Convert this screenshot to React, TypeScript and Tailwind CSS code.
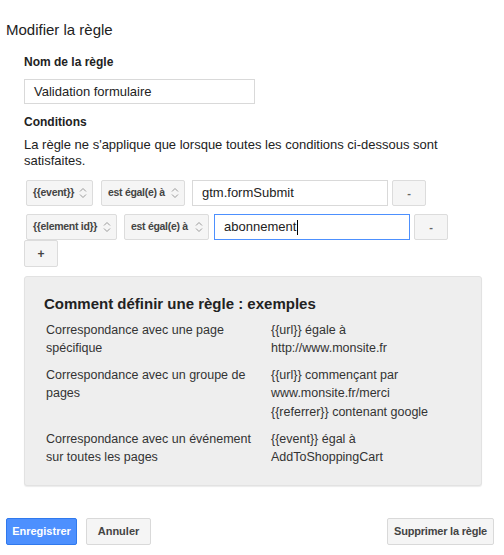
const font = { fontFamily: '"Liberation Sans", Arial, sans-serif' };

function Chevrons() {
  return (
    <svg width="8" height="12" viewBox="0 0 8 12" className="shrink-0">
      <path d="M1 4.5 L4 1.5 L7 4.5" fill="none" stroke="#9a9a9a" strokeWidth="1" />
      <path d="M1 7.5 L4 10.5 L7 7.5" fill="none" stroke="#9a9a9a" strokeWidth="1" />
    </svg>
  );
}

function Select({ label, width }: { label: string; width: string }) {
  return (
    <div
      className={`flex h-[26px] ${width} items-center justify-between gap-[3px] whitespace-nowrap rounded-[2px] border border-[#dcdcdc] bg-[#f5f5f5] pl-[6px] pr-[5px] text-[10.5px] font-bold tracking-[-0.3px] text-[#444]`}
    >
      <span>{label}</span>
      <Chevrons />
    </div>
  );
}

function MinusButton() {
  return (
    <div className="flex h-[26px] w-[34px] items-center justify-center rounded-[2px] border border-[#dcdcdc] bg-[#f5f5f5] text-[11px] font-bold text-[#666]">
      -
    </div>
  );
}

const examples = [
  {
    label: ["Correspondance avec une page", "spécifique"],
    rule: [["{{url}} égale à", "http://www.monsite.fr"]],
  },
  {
    label: ["Correspondance avec un groupe de", "pages"],
    rule: [["{{url}} commençant par", "www.monsite.fr/merci"], ["{{referrer}} contenant google"]],
  },
  {
    label: ["Correspondance avec un événement", "sur toutes les pages"],
    rule: [["{{event}} égal à", "AddToShoppingCart"]],
  },
];

export default function App() {
  return (
    <div className="h-[555px] w-[504px] bg-white text-[#222]" style={font}>
      <h1 className="pl-[6px] pt-[21px] text-[15px] leading-[18px]">Modifier la règle</h1>

      <div className="pl-[24px]">
        <div className="mt-[16px] text-[12px] font-bold leading-[15px]">Nom de la règle</div>
        <div className="mt-[9px] flex h-[25px] w-[231px] items-center border border-[#d9d9d9] pl-[9px] text-[13px]">
          Validation formulaire
        </div>

        <div className="mt-[11px] text-[12px] font-bold leading-[15px]">Conditions</div>
        <p className="mt-[7px] w-[440px] text-[13px] leading-[16px]">
          La règle ne s'applique que lorsque toutes les conditions ci-dessous sont satisfaites.
        </p>

        <div className="mt-[11px] flex flex-col pl-[2px]">
          <div className="flex items-center">
            <Select label="{{event}}" width="w-[67px]" />
            <div className="ml-[8px]">
              <Select label="est égal(e) à" width="w-[84px]" />
            </div>
            <div className="ml-[7px] flex h-[26px] w-[196px] items-center border border-[#d9d9d9] pl-[9px] text-[13px]">
              gtm.formSubmit
            </div>
            <div className="ml-[4px]">
              <MinusButton />
            </div>
          </div>
          <div className="mt-[8px] flex items-center">
            <Select label="{{element id}}" width="w-[91px]" />
            <div className="ml-[7px]">
              <Select label="est égal(e) à" width="w-[85px]" />
            </div>
            <div className="ml-[5px] flex h-[26px] w-[196px] items-center border border-[#4d90fe] pl-[9px] text-[13px]">
              abonnement
              <span className="ml-[1px] inline-block h-[15px] w-px bg-black" />
            </div>
            <div className="ml-[4px]">
              <MinusButton />
            </div>
          </div>
        </div>
        <div className="flex h-[27px] w-[34px] items-center justify-center rounded-[2px] border border-[#dcdcdc] bg-[#f5f5f5] text-[12px] font-bold text-[#444]">
          +
        </div>

        <div className="mt-[9px] h-[210px] w-[458px] rounded-[3px] border border-[#e2e2e2] bg-[#eeeeee] px-[19px] pt-[18px] shadow-[0_1px_1px_rgba(0,0,0,0.08)]">
          <h2 className="text-[15px] font-bold leading-[18px]">Comment définir une règle : exemples</h2>
          <div className="mt-[8px] flex flex-col gap-[9px] pl-[2px] text-[12.5px] leading-[18px] text-[#333]">
            {examples.map((ex, i) => (
              <div key={i} className="flex">
                <div className="w-[225px] shrink-0">
                  {ex.label.map((l) => (
                    <div key={l}>{l}</div>
                  ))}
                </div>
                <div className="flex flex-col">
                  {ex.rule.map((r, j) => (
                    <div key={j} className={j > 0 ? "mt-[1px]" : ""}>
                      {r.map((l) => (
                        <div key={l}>{l}</div>
                      ))}
                    </div>
                  ))}
                </div>
              </div>
            ))}
          </div>
        </div>
      </div>

      <div className="mt-[32px] flex items-center pl-[6px] pr-[10px]">
        <button className="h-[27px] w-[71px] rounded-[2px] border border-[#3079ed] bg-[#4d90fe] text-[11px] font-bold text-white">
          Enregistrer
        </button>
        <button className="ml-[9px] h-[27px] w-[65px] rounded-[2px] border border-[#d9d9d9] bg-[#f5f5f5] text-[11px] font-bold text-[#444]">
          Annuler
        </button>
        <button className="ml-auto h-[27px] w-[107px] whitespace-nowrap rounded-[2px] border border-[#d9d9d9] bg-[#f5f5f5] text-[11px] font-bold tracking-[-0.2px] text-[#444]">
          Supprimer la règle
        </button>
      </div>
    </div>
  );
}
